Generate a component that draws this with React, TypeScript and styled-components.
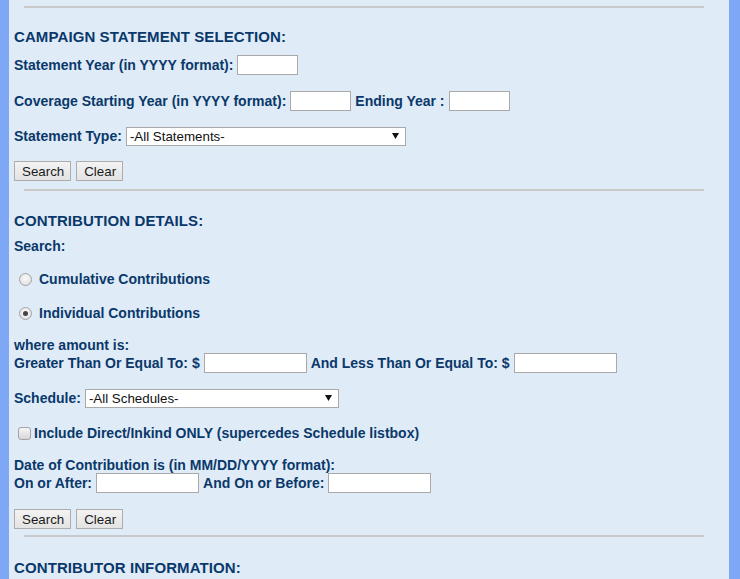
import React from 'react'
import styled, { createGlobalStyle } from 'styled-components'

const Global = createGlobalStyle`
  html, body {
    margin: 0;
    padding: 0;
    background: #7ea7f6;
  }
  body {
    font-family: "Liberation Sans", Arial, sans-serif;
  }
`

const App: React.FC = () => {
  return (
    <>
      <Global />
      <Page>
        <Panel>
          <Rule $top={6} />

          <Row $top={19} $h={18}>
            <Heading>CAMPAIGN STATEMENT SELECTION:</Heading>
          </Row>
          <Row $top={10}>
            <Label>Statement Year (in YYYY format):</Label>
            <TextBox $w={61} />
          </Row>
          <Row $top={16}>
            <Label>Coverage Starting Year (in YYYY format):</Label>
            <TextBox $w={61} />
            <Label>Ending Year :</Label>
            <TextBox $w={61} />
          </Row>
          <Row $top={15}>
            <Label>Statement Type:</Label>
            <Select $w={280}>
              <SelectValue>-All Statements-</SelectValue>
              <Arrow />
            </Select>
          </Row>
          <Row $top={15} $gap={5}>
            <Button>Search</Button>
            <Button>Clear</Button>
          </Row>

          <Rule $top={8} />

          <Row $top={20} $h={18}>
            <Heading>CONTRIBUTION DETAILS:</Heading>
          </Row>
          <Row $top={8} $h={18}>
            <Label>Search:</Label>
          </Row>
          <Row $top={14}>
            <Option $pad={5} $gap={7}>
              <Radio />
              <Label>Cumulative Contributions</Label>
            </Option>
          </Row>
          <Row $top={14}>
            <Option $pad={5} $gap={7}>
              <Radio $checked />
              <Label>Individual Contributions</Label>
            </Option>
          </Row>
          <Row $top={14} $h={16}>
            <Label>where amount is:</Label>
          </Row>
          <Row $top={0}>
            <Label>Greater Than Or Equal To: $</Label>
            <TextBox $w={103} />
            <Label>And Less Than Or Equal To: $</Label>
            <TextBox $w={103} />
          </Row>
          <Row $top={15}>
            <Label>Schedule:</Label>
            <Select $w={254}>
              <SelectValue>-All Schedules-</SelectValue>
              <Arrow />
            </Select>
          </Row>
          <Row $top={15}>
            <Option $pad={4} $gap={3}>
              <Check />
              <Label>Include Direct/Inkind ONLY (supercedes Schedule listbox)</Label>
            </Option>
          </Row>
          <Row $top={14} $h={16}>
            <Label>Date of Contribution is (in MM/DD/YYYY format):</Label>
          </Row>
          <Row $top={0}>
            <Label>On or After:</Label>
            <TextBox $w={103} />
            <Label>And On or Before:</Label>
            <TextBox $w={103} />
          </Row>
          <Row $top={16} $gap={5}>
            <Button>Search</Button>
            <Button>Clear</Button>
          </Row>

          <Rule $top={6} />

          <Row $top={21} $h={18}>
            <Heading>CONTRIBUTOR INFORMATION:</Heading>
          </Row>
        </Panel>
      </Page>
    </>
  )
}

const Arrow: React.FC = () => (
  <ArrowIcon width="7" height="6" viewBox="0 0 7 6">
    <path d="M0 0 H7 L3.5 6 Z" fill="#111" />
  </ArrowIcon>
)

const Page = styled.div`
  display: flex;
  min-height: 100vh;
  padding: 0 11px 0 9px;
  box-sizing: border-box;
`

const Panel = styled.div`
  flex: 1;
  background: #dfebf6;
  padding: 0 5px;
  overflow: hidden;
`

const Rule = styled.div<{ $top: number }>`
  margin: ${p => p.$top}px 0 0 10px;
  width: 680px;
  height: 2px;
  background: #c9c9c9;
`

const Row = styled.div<{ $top: number; $h?: number; $gap?: number }>`
  display: flex;
  align-items: center;
  gap: ${p => (p.$gap ?? 4)}px;
  margin-top: ${p => p.$top}px;
  height: ${p => (p.$h ?? 20)}px;
  white-space: nowrap;
`

const Heading = styled.div`
  font-size: 15px;
  font-weight: bold;
  color: #0a386b;
  letter-spacing: 0.1px;
`

const Label = styled.span`
  font-size: 14px;
  font-weight: bold;
  color: #0a386b;
`

const TextBox = styled.div<{ $w: number }>`
  width: ${p => p.$w}px;
  height: 20px;
  box-sizing: border-box;
  background: #fff;
  border: 1px solid #a9a9a9;
`

const Select = styled.div<{ $w: number }>`
  display: flex;
  align-items: center;
  justify-content: space-between;
  width: ${p => p.$w}px;
  height: 19px;
  box-sizing: border-box;
  padding: 0 6px 0 3px;
  background: #fff;
  border: 1px solid #a9a9a9;
`

const SelectValue = styled.span`
  font-size: 13.33px;
  color: #111;
`

const ArrowIcon = styled.svg`
  display: block;
`

const Button = styled.div`
  display: flex;
  align-items: center;
  justify-content: center;
  height: 20px;
  box-sizing: border-box;
  padding: 0 6px 0 7px;
  font-size: 13.33px;
  color: #1a1a1a;
  background: linear-gradient(#f3f3f3, #e3e3e3);
  border: 1px solid #adadad;
`

const Option = styled.label<{ $pad: number; $gap: number }>`
  display: flex;
  align-items: center;
  gap: ${p => p.$gap}px;
  padding-left: ${p => p.$pad}px;
`

const Radio = styled.span<{ $checked?: boolean }>`
  position: relative;
  width: 13px;
  height: 13px;
  box-sizing: border-box;
  border-radius: 50%;
  border: 1px solid #a3a3a3;
  background: radial-gradient(circle at 50% 40%, #fafafa, #d9d9d9);

  &::after {
    content: '';
    display: ${p => (p.$checked ? 'block' : 'none')};
    position: absolute;
    left: 3px;
    top: 3px;
    width: 5px;
    height: 5px;
    border-radius: 50%;
    background: #444;
  }
`

const Check = styled.span`
  width: 13px;
  height: 13px;
  box-sizing: border-box;
  border-radius: 3px;
  border: 1px solid #a3a3a3;
  background: linear-gradient(#f6f6f6, #d6d6d6);
`

export default App
